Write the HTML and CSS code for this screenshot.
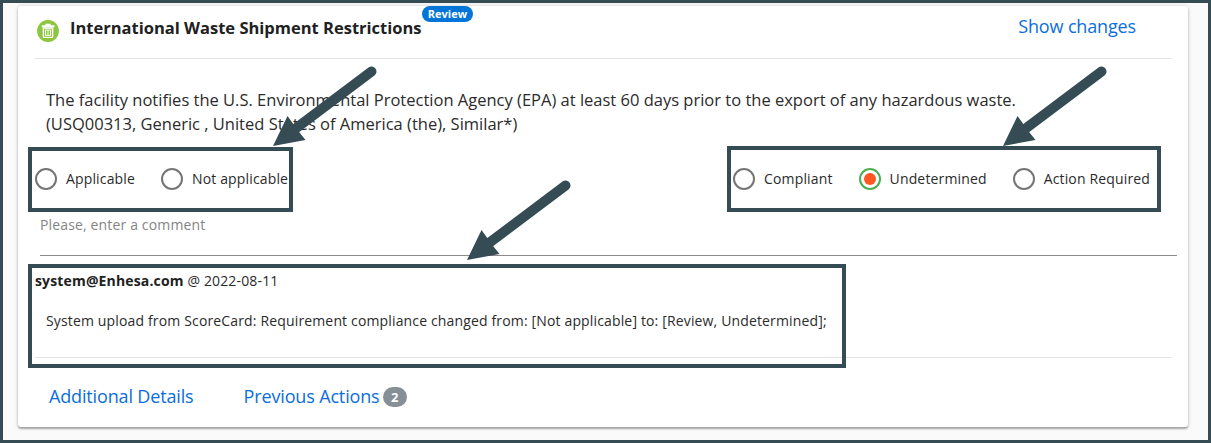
FILE: index.html
```
<!DOCTYPE html>
<html lang="en">
<head>
    <meta charset="UTF-8">
    <meta name="viewport" content="width=device-width, initial-scale=1.0">
    <title>International Waste Shipment Restrictions</title>
    <link rel="stylesheet" href="styles.css">
</head>
<body>
    <div class="page">
        <div class="card">
            <header class="card-header">
                <svg class="waste-icon" width="22" height="22" viewBox="0 0 22 22">
                    <circle cx="11" cy="11" r="10.9" fill="#8cc63f"/>
                    <path d="M4.8 7.2V5.3h3.6V3.8h5.4v1.5h3.6v1.9z" fill="#fff"/>
                    <path d="M6.4 8v8.6q0 .8.8.8h7.6q.8 0 .8-.8V8z" fill="none" stroke="#fff" stroke-width="1.4"/>
                    <path d="M8.5 10h5v5.3h-5zM11 10v5.3" fill="none" stroke="#fff" stroke-width="1"/>
                </svg>
                <h1 class="card-title">International Waste Shipment Restrictions</h1>
                <span class="review-badge">Review</span>
                <a href="#" class="show-changes">Show changes</a>
            </header>

            <p class="requirement">The facility notifies the U.S. Environmental Protection Agency (EPA) at least 60 days prior to the export of any hazardous waste.<br>(USQ00313, Generic , United States of America (the), Similar*)</p>

            <form class="options">
                <div class="radio-group">
                    <label class="radio"><span class="radio-circle"></span>Applicable</label>
                    <label class="radio"><span class="radio-circle"></span>Not applicable</label>
                </div>
                <div class="radio-group">
                    <label class="radio"><span class="radio-circle"></span>Compliant</label>
                    <label class="radio"><span class="radio-circle checked"></span>Undetermined</label>
                    <label class="radio"><span class="radio-circle"></span>Action Required</label>
                </div>
            </form>

            <div class="comment-field">Please, enter a comment</div>

            <div class="log">
                <div class="log-author"><b>system@Enhesa.com</b> @ 2022-08-11</div>
                <div class="log-text">System upload from ScoreCard: Requirement compliance changed from: [Not applicable] to: [Review, Undetermined];</div>
            </div>

            <footer class="card-footer">
                <a href="#">Additional Details</a>
                <a href="#">Previous Actions</a>
                <span class="count-badge">2</span>
            </footer>
        </div>

        <!-- guide annotations -->
        <svg class="annotations" width="1211" height="443" viewBox="0 0 1211 443">
            <defs>
                <g id="arrow">
                    <path d="M98.5 -75.5L18 -15" stroke="#364c54" stroke-width="10" stroke-linecap="round"/>
                    <path d="M0 -1L14.5 -31L21 -22L26.5 -14.5L32.5 -7z" fill="#364c54"/>
                </g>
            </defs>
            <g fill="none" stroke="#364c54" stroke-width="4">
                <rect x="30" y="149" width="261" height="61"/>
                <rect x="729" y="148" width="430" height="62"/>
                <rect x="30" y="266" width="814" height="100"/>
            </g>
            <use href="#arrow" x="273" y="147"/>
            <use href="#arrow" x="1003" y="147"/>
            <use href="#arrow" x="467" y="261"/>
        </svg>
    </div>
</body>
</html>
```
FILE: styles.css
```
* {
    margin: 0;
    padding: 0;
    box-sizing: border-box;
}

body {
    font-family: 'Open Sans', sans-serif;
    color: #2b2b2b;
}

a {
    color: #0b6edc;
    text-decoration: none;
}

.page {
    position: relative;
    height: 443px;
    padding: 3px 20px 13px 15px;
    border: 3px solid #364c54;
    background-color: #fafafa;
}

.card {
    height: 421px;
    padding: 0 17px;
    border-radius: 3px;
    background-color: white;
    box-shadow: 0 2px 2px rgba(0, 0, 0, 0.3), 0 0 4px rgba(0, 0, 0, 0.16);
}

.card-header {
    height: 53px;
    display: flex;
    align-items: flex-start;
    border-bottom: 1px solid #e2e2e2;
}

.waste-icon {
    margin: 14px 11px 0 2px;
}

.card-title {
    width: 352px;
    margin-top: 10px;
    color: #212121;
    font-size: 16.5px;
    line-height: 24px;
    font-weight: 700;
    white-space: nowrap;
}

.review-badge {
    width: 51px;
    height: 16px;
    border-radius: 8px;
    background-color: #0275d8;
    color: white;
    font-size: 11px;
    line-height: 15px;
    font-weight: 700;
    text-align: center;
}

.show-changes {
    margin: 8px 35px 0 auto;
    font-size: 18px;
    line-height: 25px;
    letter-spacing: -0.15px;
}

.requirement {
    padding: 29px 11px 0;
    font-size: 16.5px;
    line-height: 24px;
    white-space: nowrap;
}

.options {
    display: flex;
    justify-content: space-between;
    padding: 32px 21px 0 0;
}

.radio-group {
    display: flex;
    gap: 26px;
}

.radio {
    display: flex;
    align-items: center;
    font-size: 14px;
    line-height: 22px;
    letter-spacing: 0.15px;
}

.radio-circle {
    width: 22px;
    height: 22px;
    margin-right: 9px;
    border: 2px solid #757575;
    border-radius: 50%;
}

.radio-circle.checked {
    padding: 3px;
    border-color: #4caf50;
    background: #ff5722 content-box;
}

.comment-field {
    height: 66px;
    margin: 0 -6px 0 5px;
    padding-top: 25px;
    border-bottom: 1px solid #8c8c8c;
    color: #858585;
    font-size: 14px;
    line-height: 20px;
    letter-spacing: 0.15px;
}

.log {
    height: 102px;
    padding-top: 15px;
    border-bottom: 1px solid #e2e2e2;
    font-size: 14px;
    line-height: 20px;
    letter-spacing: 0.15px;
}

.log-author b {
    color: #212121;
    font-weight: 700;
}

.log-text {
    padding: 20px 11px 0;
}

.card-footer {
    display: flex;
    align-items: center;
    padding: 26px 14px 0;
    font-size: 18px;
    line-height: 25px;
    letter-spacing: -0.15px;
}

.card-footer a + a {
    margin-left: 50px;
}

.count-badge {
    width: 24px;
    height: 20px;
    margin-left: 3px;
    border-radius: 10px;
    background-color: #868e96;
    color: white;
    font-size: 13px;
    line-height: 20px;
    font-weight: 700;
    text-align: center;
}

.annotations {
    position: absolute;
    top: -3px;
    left: -3px;
}
```
